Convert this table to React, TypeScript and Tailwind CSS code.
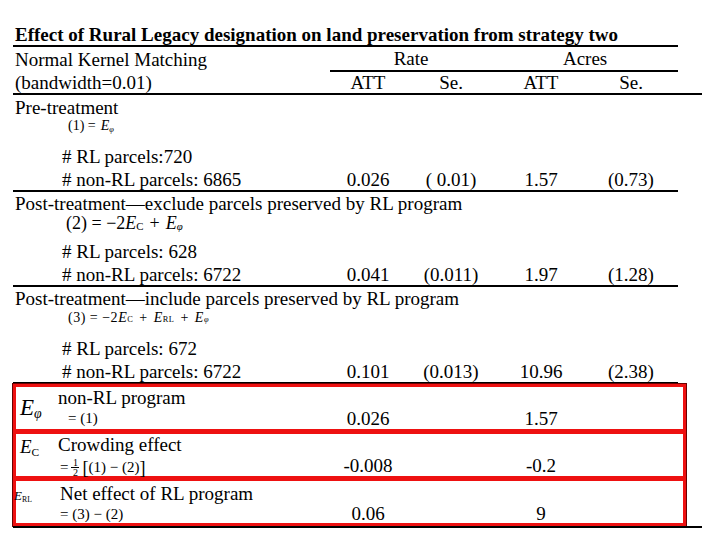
const SERIF = "font-['Liberation_Serif','Times_New_Roman',serif]";

const COLS = ["w-[86px]", "w-[80px]", "w-[100px]", "w-[80px]"];

function Values({ vals, className = "" }: { vals: string[]; className?: string }) {
  return (
    <>
      {vals.map((v, i) => (
        <div key={i} className={`${COLS[i]} text-center ${className}`}>
          {v}
        </div>
      ))}
    </>
  );
}

function Phi() {
  return (
    <>
      <i>E</i>
      <sub className="text-[0.6em] italic">&phi;</sub>
    </>
  );
}

function ParcelBlock({ rl, nonRl, vals }: { rl: string; nonRl: string; vals: string[] }) {
  return (
    <>
      <div className="h-[24px] flex items-center pl-[49px]">{rl}</div>
      <div className="h-[24px] flex items-center border-b-2 border-black">
        <div className="w-[312px] pl-[49px]">{nonRl}</div>
        <Values vals={vals} />
      </div>
    </>
  );
}

function RedBox({
  symbol,
  title,
  formula,
  vals,
  first,
  symbolClass,
  titleClass,
  valueClass,
}: {
  symbol: React.ReactNode;
  title: string;
  formula: React.ReactNode;
  vals: string[];
  first?: boolean;
  symbolClass: string;
  titleClass: string;
  valueClass: string;
}) {
  return (
    <div className={`h-[42px] flex ${first ? "" : "border-t-[5px] border-[#ee1111] box-content"}`}>
      <div className="w-[309px] flex">
        <div className={`w-[42px] ${symbolClass}`}>{symbol}</div>
        <div className="flex flex-col">
          <div className={`h-[20px] flex items-center ${titleClass}`}>{title}</div>
          <div className="h-[22px] flex items-center">{formula}</div>
        </div>
      </div>
      <div className={`flex items-end ${valueClass}`}>
        <Values vals={vals} />
      </div>
    </div>
  );
}

export default function App() {
  return (
    <div className={`w-[720px] h-[540px] bg-white text-black text-[19px] leading-none overflow-hidden ${SERIF}`}>
      <div className="ml-[13px] pt-[23px]">
        <div className="w-[665px] h-[24px] border-b-2 border-black flex items-center pl-[2px] font-bold text-[19px]">
          Effect of Rural Legacy designation on land preservation from strategy two
        </div>

        <div className="w-[665px] h-[25px] flex">
          <div className="w-[317px] flex items-center pl-[2px]">Normal Kernel Matching</div>
          <div className="w-[348px] flex items-center border-b-2 border-black">
            <div className="w-[164px] text-center">Rate</div>
            <div className="w-[188px] text-center">Acres</div>
          </div>
        </div>

        <div className="w-[689px] h-[23px] border-b-2 border-black flex items-center">
          <div className="w-[312px] pl-[2px]">(bandwidth=0.01)</div>
          <Values vals={["ATT", "Se.", "ATT", "Se."]} />
        </div>

        <div className="w-[665px]">
          <div className="h-[24px] flex items-center pl-[2px]">Pre-treatment</div>
          <div className="h-[13px] flex items-center pl-[55px] text-[14px]">
            (1) = <span className="ml-[5px]"><Phi /></span>
          </div>
          <div className="h-[12px]" />
          <ParcelBlock rl="# RL parcels:720" nonRl="# non-RL parcels: 6865" vals={["0.026", "( 0.01)", "1.57", "(0.73)"]} />

          <div className="h-[22px] flex items-center pl-[2px]">
            Post-treatment—exclude parcels preserved by RL program
          </div>
          <div className="h-[18px] flex items-center pl-[53px] text-[18px]">
            (2) = −2<i>E</i>
            <sub className="text-[0.6em]">C</sub>
            <span className="mx-[6px]">+</span>
            <Phi />
          </div>
          <div className="h-[7px]" />
          <ParcelBlock rl="# RL parcels: 628" nonRl="# non-RL parcels: 6722" vals={["0.041", "(0.011)", "1.97", "(1.28)"]} />

          <div className="h-[23px] flex items-center pl-[2px]">
            Post-treatment—include parcels preserved by RL program
          </div>
          <div className="h-[16px] flex items-center pl-[55px] text-[14px] tracking-[0.5px]">
            (3) = −2<i>E</i>
            <sub className="text-[0.6em]">C</sub>
            <span className="mx-[6px]">+</span>
            <i>E</i>
            <sub className="text-[0.6em]">RL</sub>
            <span className="mx-[6px]">+</span>
            <Phi />
          </div>
          <div className="h-[10px]" />
          <ParcelBlock rl="# RL parcels: 672" nonRl="# non-RL parcels: 6722" vals={["0.101", "(0.013)", "10.96", "(2.38)"]} />
        </div>

        <div className="w-[673px] border-[3px] border-[#ee1111] shadow-[0_0_0_1px_#6b0000]">
          <RedBox
            first
            symbol={
              <span className="text-[23px] pl-[4px] leading-[40px]">
                <Phi />
              </span>
            }
            symbolClass="flex items-center"
            title="non-RL program"
            titleClass="pt-[0px]"
            formula={<span className="pl-[10px] text-[15px]">= (1)</span>}
            vals={["0.026", "", "1.57", ""]}
            valueClass="pb-[1px]"
          />
          <RedBox
            symbol={
              <span className="text-[19px] pl-[4px]">
                <i>E</i>
                <sub className="text-[0.6em]">C</sub>
              </span>
            }
            symbolClass="pt-[3px]"
            title="Crowding effect"
            titleClass="pt-[1px]"
            formula={
              <span className="pl-[2px] text-[15px] flex items-center pt-[5px]">
                =
                <span className="inline-flex flex-col items-center text-[10px] mx-[3px] leading-[9px]">
                  <span>1</span>
                  <span className="border-t border-black w-[8px] text-center">2</span>
                </span>
                <span className="text-[18px]">[</span>(1) − (2)<span className="text-[18px]">]</span>
              </span>
            }
            vals={["-0.008", "", "-0.2", ""]}
            valueClass="pb-[1px]"
          />
          <RedBox
            symbol={
              <span className="text-[13px]">
                <i>E</i>
                <sub className="text-[0.6em]">RL</sub>
              </span>
            }
            symbolClass="-ml-[2px] pt-[3px]"
            title="Net effect of RL program"
            titleClass="pl-[4px] pt-[5px]"
            formula={<span className="pl-[4px] text-[15px] pt-[5px]">= (3) − (2)</span>}
            vals={["0.06", "", "9", ""]}
            valueClass="pb-[0px]"
          />
        </div>
        <div className="w-[689px] h-[2px] bg-black" />
      </div>
    </div>
  );
}
